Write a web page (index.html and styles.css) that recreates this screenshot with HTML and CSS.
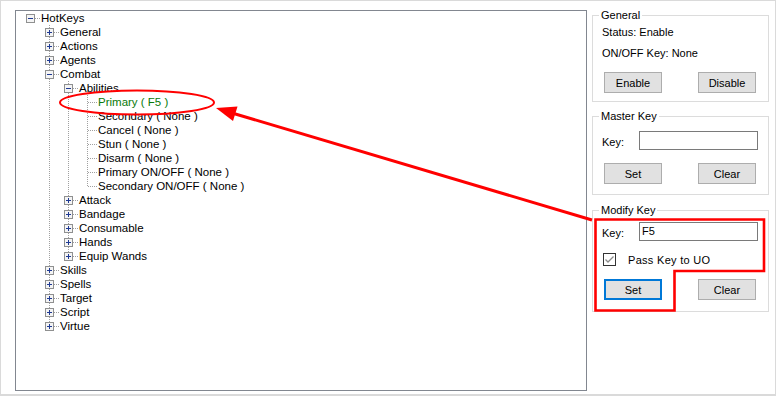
FILE: index.html
```html
<!DOCTYPE html>
<html>
<head>
<meta charset="utf-8">
<link rel="stylesheet" href="styles.css">
</head>
<body>
<div class="frame">
  <div class="tree-panel">
    <ul class="tree">
      <li class="root">
        <div class="row"><span class="gutter"><svg class="exp" width="9" height="9" viewBox="0 0 9 9" shape-rendering="crispEdges"><rect x="0.5" y="0.5" width="8" height="8" fill="#f4f4f4" stroke="#8f9090"/><path d="M2 4.5H7" stroke="#1f3a93"/></svg></span><span class="label">HotKeys</span></div>
        <ul>
          <li><div class="row"><span class="gutter"><svg class="exp" width="9" height="9" viewBox="0 0 9 9" shape-rendering="crispEdges"><rect x="0.5" y="0.5" width="8" height="8" fill="#f4f4f4" stroke="#8f9090"/><path d="M2 4.5H7M4.5 2V7" stroke="#1f3a93"/></svg></span><span class="label">General</span></div></li>
          <li><div class="row"><span class="gutter"><svg class="exp" width="9" height="9" viewBox="0 0 9 9" shape-rendering="crispEdges"><rect x="0.5" y="0.5" width="8" height="8" fill="#f4f4f4" stroke="#8f9090"/><path d="M2 4.5H7M4.5 2V7" stroke="#1f3a93"/></svg></span><span class="label">Actions</span></div></li>
          <li><div class="row"><span class="gutter"><svg class="exp" width="9" height="9" viewBox="0 0 9 9" shape-rendering="crispEdges"><rect x="0.5" y="0.5" width="8" height="8" fill="#f4f4f4" stroke="#8f9090"/><path d="M2 4.5H7M4.5 2V7" stroke="#1f3a93"/></svg></span><span class="label">Agents</span></div></li>
          <li><div class="row"><span class="gutter"><svg class="exp" width="9" height="9" viewBox="0 0 9 9" shape-rendering="crispEdges"><rect x="0.5" y="0.5" width="8" height="8" fill="#f4f4f4" stroke="#8f9090"/><path d="M2 4.5H7" stroke="#1f3a93"/></svg></span><span class="label">Combat</span></div>
            <ul>
              <li><div class="row"><span class="gutter"><svg class="exp" width="9" height="9" viewBox="0 0 9 9" shape-rendering="crispEdges"><rect x="0.5" y="0.5" width="8" height="8" fill="#f4f4f4" stroke="#8f9090"/><path d="M2 4.5H7" stroke="#1f3a93"/></svg></span><span class="label">Abilities</span></div>
                <ul>
                  <li><div class="row"><span class="gutter leaf"></span><span class="label sel">Primary ( F5 )</span></div></li>
                  <li><div class="row"><span class="gutter leaf"></span><span class="label">Secondary ( None )</span></div></li>
                  <li><div class="row"><span class="gutter leaf"></span><span class="label">Cancel ( None )</span></div></li>
                  <li><div class="row"><span class="gutter leaf"></span><span class="label">Stun ( None )</span></div></li>
                  <li><div class="row"><span class="gutter leaf"></span><span class="label">Disarm ( None )</span></div></li>
                  <li><div class="row"><span class="gutter leaf"></span><span class="label">Primary ON/OFF ( None )</span></div></li>
                  <li><div class="row"><span class="gutter leaf"></span><span class="label">Secondary ON/OFF ( None )</span></div></li>
                </ul>
              </li>
              <li><div class="row"><span class="gutter"><svg class="exp" width="9" height="9" viewBox="0 0 9 9" shape-rendering="crispEdges"><rect x="0.5" y="0.5" width="8" height="8" fill="#f4f4f4" stroke="#8f9090"/><path d="M2 4.5H7M4.5 2V7" stroke="#1f3a93"/></svg></span><span class="label">Attack</span></div></li>
              <li><div class="row"><span class="gutter"><svg class="exp" width="9" height="9" viewBox="0 0 9 9" shape-rendering="crispEdges"><rect x="0.5" y="0.5" width="8" height="8" fill="#f4f4f4" stroke="#8f9090"/><path d="M2 4.5H7M4.5 2V7" stroke="#1f3a93"/></svg></span><span class="label">Bandage</span></div></li>
              <li><div class="row"><span class="gutter"><svg class="exp" width="9" height="9" viewBox="0 0 9 9" shape-rendering="crispEdges"><rect x="0.5" y="0.5" width="8" height="8" fill="#f4f4f4" stroke="#8f9090"/><path d="M2 4.5H7M4.5 2V7" stroke="#1f3a93"/></svg></span><span class="label">Consumable</span></div></li>
              <li><div class="row"><span class="gutter"><svg class="exp" width="9" height="9" viewBox="0 0 9 9" shape-rendering="crispEdges"><rect x="0.5" y="0.5" width="8" height="8" fill="#f4f4f4" stroke="#8f9090"/><path d="M2 4.5H7M4.5 2V7" stroke="#1f3a93"/></svg></span><span class="label">Hands</span></div></li>
              <li><div class="row"><span class="gutter"><svg class="exp" width="9" height="9" viewBox="0 0 9 9" shape-rendering="crispEdges"><rect x="0.5" y="0.5" width="8" height="8" fill="#f4f4f4" stroke="#8f9090"/><path d="M2 4.5H7M4.5 2V7" stroke="#1f3a93"/></svg></span><span class="label">Equip Wands</span></div></li>
            </ul>
          </li>
          <li><div class="row"><span class="gutter"><svg class="exp" width="9" height="9" viewBox="0 0 9 9" shape-rendering="crispEdges"><rect x="0.5" y="0.5" width="8" height="8" fill="#f4f4f4" stroke="#8f9090"/><path d="M2 4.5H7M4.5 2V7" stroke="#1f3a93"/></svg></span><span class="label">Skills</span></div></li>
          <li><div class="row"><span class="gutter"><svg class="exp" width="9" height="9" viewBox="0 0 9 9" shape-rendering="crispEdges"><rect x="0.5" y="0.5" width="8" height="8" fill="#f4f4f4" stroke="#8f9090"/><path d="M2 4.5H7M4.5 2V7" stroke="#1f3a93"/></svg></span><span class="label">Spells</span></div></li>
          <li><div class="row"><span class="gutter"><svg class="exp" width="9" height="9" viewBox="0 0 9 9" shape-rendering="crispEdges"><rect x="0.5" y="0.5" width="8" height="8" fill="#f4f4f4" stroke="#8f9090"/><path d="M2 4.5H7M4.5 2V7" stroke="#1f3a93"/></svg></span><span class="label">Target</span></div></li>
          <li><div class="row"><span class="gutter"><svg class="exp" width="9" height="9" viewBox="0 0 9 9" shape-rendering="crispEdges"><rect x="0.5" y="0.5" width="8" height="8" fill="#f4f4f4" stroke="#8f9090"/><path d="M2 4.5H7M4.5 2V7" stroke="#1f3a93"/></svg></span><span class="label">Script</span></div></li>
          <li><div class="row"><span class="gutter"><svg class="exp" width="9" height="9" viewBox="0 0 9 9" shape-rendering="crispEdges"><rect x="0.5" y="0.5" width="8" height="8" fill="#f4f4f4" stroke="#8f9090"/><path d="M2 4.5H7M4.5 2V7" stroke="#1f3a93"/></svg></span><span class="label">Virtue</span></div></li>
        </ul>
      </li>
    </ul>
  </div>

  <div class="side">
    <fieldset class="group g-general">
      <legend>General</legend>
      <div class="gbody">
        <div class="line">Status: Enable</div>
        <div class="line line2">ON/OFF Key: None</div>
        <div class="btns"><button class="btn">Enable</button><button class="btn">Disable</button></div>
      </div>
    </fieldset>
    <fieldset class="group g-master">
      <legend>Master Key</legend>
      <div class="gbody">
        <div class="keyrow"><span class="keylbl">Key:</span><span class="input"></span></div>
        <div class="btns"><button class="btn">Set</button><button class="btn">Clear</button></div>
      </div>
    </fieldset>
    <fieldset class="group g-modify">
      <legend>Modify Key</legend>
      <div class="gbody">
        <div class="keyrow"><span class="keylbl">Key:</span><span class="input">F5</span></div>
        <div class="checkrow"><span class="check"><svg width="11" height="11" viewBox="0 0 11 11"><path d="M1.5 5.5L4 8L9.5 2.5" fill="none" stroke="#8a8a8a" stroke-width="1.3"/></svg></span><span class="checklbl">Pass Key to UO</span></div>
        <div class="btns btns-mod"><button class="btn focus">Set</button><button class="btn">Clear</button></div>
      </div>
    </fieldset>
  </div>

  <svg class="annot" width="778" height="396" viewBox="0 0 778 396">
    <ellipse cx="137" cy="102.5" rx="77" ry="12" fill="none" stroke="#ff0000" stroke-width="2"/>
    <line x1="592" y1="220" x2="232" y2="113" stroke="#ff0000" stroke-width="3"/>
    <polygon points="216,108 237.5,106.5 233,121" fill="#ff0000"/>
    <polygon points="595.5,219.5 764,219.5 764,271 674.5,271 674.5,310.5 595.5,310.5" fill="none" stroke="#ff0000" stroke-width="2.6"/>
  </svg>
</div>
</body>
</html>
```

FILE: styles.css
```css
body {
  margin: 0;
  background: #ffffff;
  font-family: "Liberation Sans", Arial, sans-serif;
  color: #000;
}

.frame {
  position: relative;
  box-sizing: border-box;
  width: 776px;
  height: 396px;
  border: 1px solid #dadada;
  border-bottom-width: 2px;
  display: flex;
  align-items: flex-start;
  padding: 7px 0 0 14px;
}

/* ---------- tree ---------- */
.tree-panel {
  box-sizing: border-box;
  width: 572px;
  height: 381px;
  margin-top: 2px;
  border: 1px solid #828790;
  background: #fff;
  flex: none;
}

.tree,
.tree ul {
  list-style: none;
  margin: 0;
  padding: 0;
}

.tree {
  padding-left: 5px;
}

.tree ul {
  padding-left: 19px;
}

.tree li {
  background: repeating-linear-gradient(to bottom, #a0a0a0 0 1px, transparent 1px 2px) 9px 0 / 1px 100% no-repeat;
}

.tree li:last-child {
  background-size: 1px 8px;
}

.tree li.root {
  background: none;
}

.row {
  display: flex;
  height: 14px;
  font-size: 11.5px;
  line-height: 14px;
  white-space: nowrap;
}

.gutter {
  flex: none;
  display: flex;
  width: 19px;
  height: 14px;
  background: repeating-linear-gradient(to right, #a0a0a0 0 1px, transparent 1px 2px) 10px 7px / 10px 1px no-repeat;
}

.exp {
  display: block;
  margin: 3px 0 0 5px;
}

.label {
  padding-left: 1px;
}

.label.sel {
  color: #0a7a0a;
}

/* ---------- side panel ---------- */
.side {
  flex: none;
  width: 177px;
  margin-left: 5px;
  display: flex;
  flex-direction: column;
  font-size: 11px;
}

.group {
  margin: 0;
  padding: 0;
  min-width: 0;
  border: 1px solid #dcdcdc;
}

.group legend {
  padding: 0 2px;
  margin-left: 6px;
  font-size: 11px;
  line-height: 14px;
}

.g-master {
  margin-top: 7px;
}

.g-modify {
  margin-top: 8px;
}

.gbody {
  padding-left: 9px;
}

.g-general .gbody {
  padding-top: 3px;
  padding-bottom: 8px;
}

.g-master .gbody {
  padding-top: 8px;
  padding-bottom: 10px;
}

.g-modify .gbody {
  padding-top: 5px;
  padding-bottom: 11px;
}

.line {
  height: 14px;
  line-height: 14px;
}

.line2 {
  margin-top: 7px;
}

.btns {
  display: flex;
  justify-content: space-between;
  padding: 0 12px 0 2px;
  margin-top: 13px;
}

.g-general .btns {
  margin-top: 12px;
}

.btns-mod {
  margin-top: 13px;
}

.btn {
  box-sizing: border-box;
  width: 58px;
  height: 21px;
  margin: 0;
  padding: 0;
  border: 1px solid #adadad;
  background: #e1e1e1;
  font-family: "Liberation Sans", Arial, sans-serif;
  font-size: 11px;
  color: #000;
}

.btn.focus {
  border: 2px solid #0078d7;
}

.keyrow {
  display: flex;
  align-items: center;
  padding-right: 10px;
  height: 19px;
}

.keylbl {
  width: 37px;
  flex: none;
  padding-top: 3px;
}

.input {
  box-sizing: border-box;
  flex: 1;
  height: 19px;
  border: 1px solid #7a7a7a;
  background: #fff;
  font-size: 11px;
  line-height: 17px;
  padding-left: 2px;
}

.checkrow {
  display: flex;
  align-items: center;
  height: 13px;
  margin-top: 12px;
  padding-left: 1px;
}

.check {
  box-sizing: border-box;
  flex: none;
  width: 13px;
  height: 13px;
  border: 1px solid #333;
  background: #fff;
  display: flex;
}

.checklbl {
  margin-left: 12px;
  letter-spacing: 0.3px;
}

/* ---------- annotation overlay ---------- */
.annot {
  position: absolute;
  left: -1px;
  top: -1px;
  pointer-events: none;
}
```
